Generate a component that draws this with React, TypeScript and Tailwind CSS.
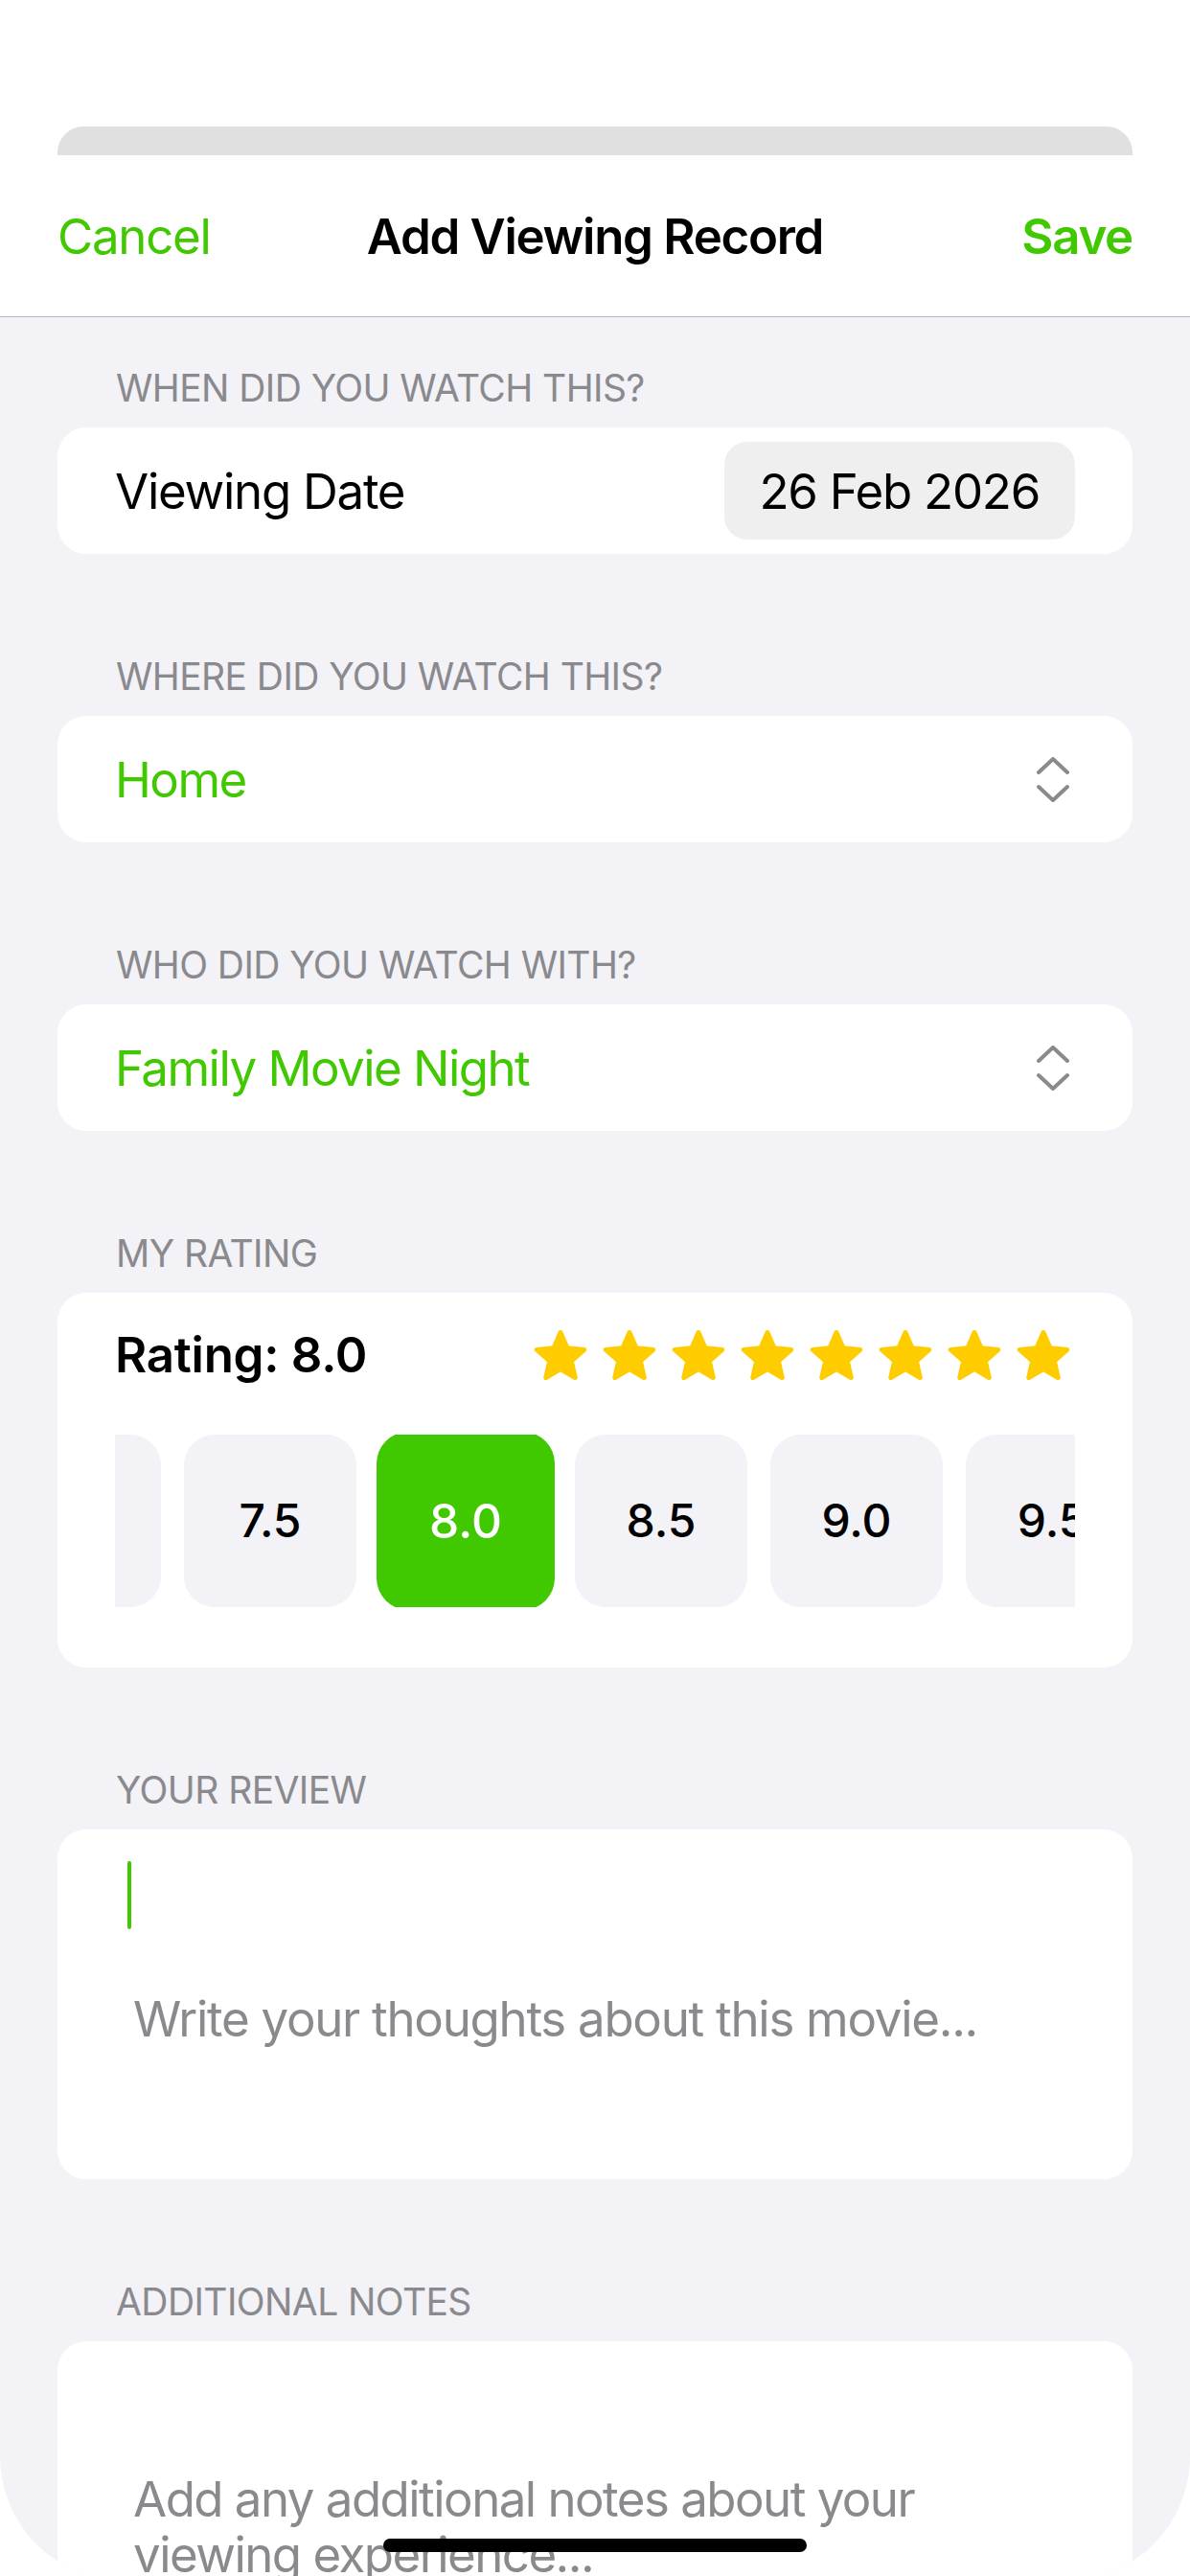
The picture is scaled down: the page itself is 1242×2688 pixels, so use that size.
import type { ReactNode } from 'react';

const RATINGS = ['7.0', '7.5', '8.0', '8.5', '9.0', '9.5', '10.0'];
const SELECTED = '8.0';

const labelClass =
  'pl-[61px] text-[39px] leading-[47px] uppercase text-[#8a8a8e] tracking-[-0.015em]';
const bodyText = 'text-[51px] leading-[61px] tracking-[-0.025em]';

function Section({ title, children }: { title: string; children: ReactNode }) {
  return (
    <section className="mx-[60px]">
      <div className={labelClass}>{title}</div>
      <div className="mt-[18px]">{children}</div>
    </section>
  );
}

function Star() {
  return (
    <svg width="56" height="52" viewBox="0 0 56 52" className="shrink-0">
      <polygon
        points="28,2.5 35.05,18.79 52.73,20.47 39.41,32.21 43.28,49.53 28,40.5 12.72,49.53 16.59,32.21 3.27,20.47 20.95,18.79"
        fill="#ffcc00"
        stroke="#ffcc00"
        strokeWidth="5"
        strokeLinejoin="round"
      />
    </svg>
  );
}

function UpDownChevron() {
  return (
    <svg width="34" height="47" viewBox="0 0 34 47" fill="none" stroke="#8a8a8e" strokeWidth="4" strokeLinecap="round" strokeLinejoin="round">
      <polyline points="2,16 17,2 32,16" />
      <polyline points="2,31 17,45 32,31" />
    </svg>
  );
}

function PickerRow({ value }: { value: string }) {
  return (
    <div className="flex h-[132px] items-center justify-between rounded-[30px] bg-white pl-[60px] pr-[66px]">
      <span className="text-[51px] leading-[61px] tracking-[-0.03em] text-[#40c800]">{value}</span>
      <UpDownChevron />
    </div>
  );
}

export default function App() {
  return (
    <div className="relative h-[2688px] w-[1242px] overflow-hidden bg-white font-['Inter',sans-serif] text-black">
      <div className="h-[132px]" />
      {/* sheet underneath */}
      <div className="mx-[60px] h-[30px] rounded-t-[27px] bg-[#e0e0e0]" />

      <div className="flex h-[2531px] flex-col overflow-hidden rounded-b-[130px] bg-[#f2f2f7]">
        {/* Nav bar */}
        <div className="grid h-[169px] shrink-0 grid-cols-[1fr_auto_1fr] items-center border-b border-[#b8b8bc] bg-white px-[60px]">
          <button className={`${bodyText} justify-self-start text-[#40c800]`}>Cancel</button>
          <div className={`${bodyText} font-semibold`}>Add Viewing Record</div>
          <button className={`${bodyText} justify-self-end font-semibold text-[#40c800]`}>Save</button>
        </div>

        <div className="flex flex-col gap-[104px] pt-[50px]">
          <Section title="When did you watch this?">
            <div className="flex h-[132px] items-center justify-between rounded-[30px] bg-white px-[60px]">
              <span className={bodyText}>Viewing Date</span>
              <span className={`${bodyText} flex h-[102px] items-center rounded-[24px] bg-[#efeff0] px-[37px]`}>
                26 Feb 2026
              </span>
            </div>
          </Section>

          <Section title="Where did you watch this?">
            <PickerRow value="Home" />
          </Section>

          <Section title="Who did you watch with?">
            <PickerRow value="Family Movie Night" />
          </Section>

          <Section title="My Rating">
            <div className="rounded-[30px] bg-white px-[60px] pb-[63px] pt-[34px]">
              <div className="flex h-[61px] items-center justify-between">
                <span className="text-[51px] font-semibold leading-[61px] tracking-[-0.005em]">Rating: 8.0</span>
                <div className="flex gap-[16px] pr-[5px]">
                  {Array.from({ length: 8 }).map((_, i) => (
                    <Star key={i} />
                  ))}
                </div>
              </div>
              <div className="mt-[53px] h-[180px] overflow-hidden">
                <div className="-ml-[132px] flex gap-[24px]">
                  {RATINGS.map((r) =>
                    r === SELECTED ? (
                      <div
                        key={r}
                        className="flex h-[180px] w-[180px] shrink-0 scale-[1.033] items-center justify-center rounded-[32px] bg-[#40c800] text-[48px] font-medium text-white"
                      >
                        {r}
                      </div>
                    ) : (
                      <div
                        key={r}
                        className="flex h-[180px] w-[180px] shrink-0 items-center justify-center rounded-[32px] bg-[#f2f2f7] text-[48px] font-medium"
                      >
                        {r}
                      </div>
                    )
                  )}
                </div>
              </div>
            </div>
          </Section>

          <Section title="Your Review">
            <div className="h-[365px] rounded-[30px] bg-white pt-[33px]">
              <div className="ml-[73px] h-[71px] w-[4px] rounded-full bg-[#40c800]" />
              <div className={`${bodyText} mt-[63px] pl-[79px] text-[#8a8a8e]`}>
                Write your thoughts about this movie...
              </div>
            </div>
          </Section>

          <Section title="Additional Notes">
            <div className="h-[420px] rounded-[30px] bg-white pt-[136px]">
              <div className="pl-[79px] pr-[60px] text-[51px] leading-[58px] tracking-[-0.03em] text-[#8a8a8e]">
                Add any additional notes about your viewing experience...
              </div>
            </div>
          </Section>
        </div>
      </div>

      {/* home indicator */}
      <div className="absolute left-[400px] top-[2649px] h-[14px] w-[442px] rounded-full bg-black" />
    </div>
  );
}
